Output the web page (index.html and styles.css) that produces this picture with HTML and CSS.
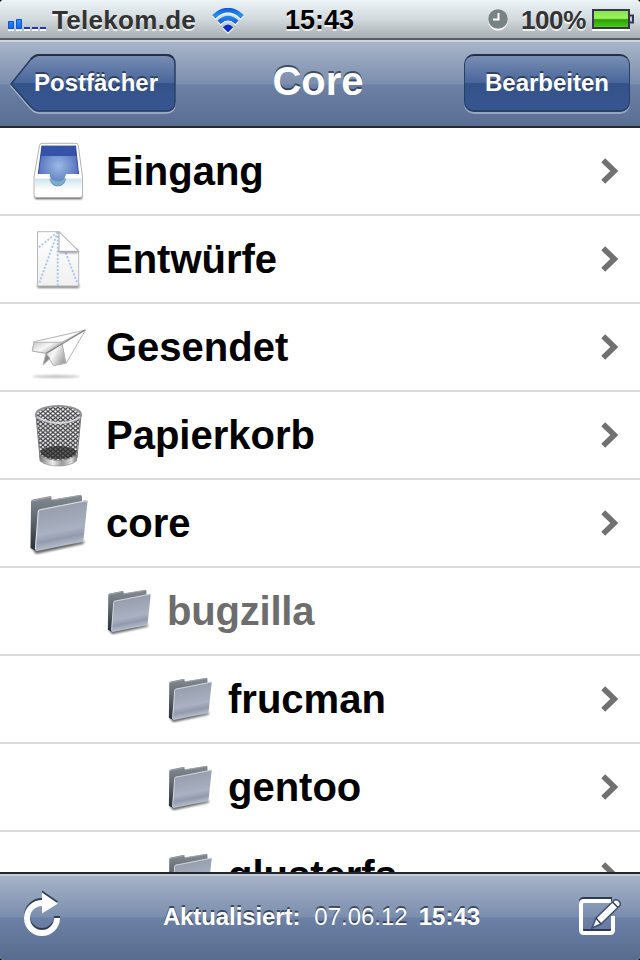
FILE: index.html
```html
<!DOCTYPE html>
<html lang="de">
<head>
<meta charset="utf-8">
<title>Core</title>
<link rel="stylesheet" href="styles.css">
</head>
<body>
<svg class="defs" width="0" height="0" aria-hidden="true">
  <defs>
    <linearGradient id="back" x1="0" y1="0" x2="0" y2="1"><stop offset="0" stop-color="#858d94"/><stop offset=".45" stop-color="#5f676e"/><stop offset="1" stop-color="#252c36"/></linearGradient>
    <linearGradient id="front" x1=".3" y1="0" x2=".5" y2="1"><stop offset="0" stop-color="#929aa8"/><stop offset=".62" stop-color="#a9b1c2"/><stop offset=".76" stop-color="#929bad"/><stop offset="1" stop-color="#cdd3de"/></linearGradient>
    <linearGradient id="tray" x1="0" y1="0" x2="0" y2="1"><stop offset="0" stop-color="#c9e2ec"/><stop offset=".7" stop-color="#fff"/></linearGradient>
    <radialGradient id="well" cx=".5" cy=".5" r=".6"><stop offset="0" stop-color="#9bb9e4"/><stop offset="1" stop-color="#4966b8"/></radialGradient>
    <linearGradient id="paper" x1="0" y1="0" x2="0" y2="1"><stop offset="0" stop-color="#fff"/><stop offset="1" stop-color="#f0f0f0"/></linearGradient>
    <linearGradient id="wing" x1="0" y1="0" x2="1" y2=".6"><stop offset="0" stop-color="#c4c4c4"/><stop offset=".5" stop-color="#f8f8f8"/><stop offset="1" stop-color="#a4a4a4"/></linearGradient>
    <linearGradient id="metal"><stop offset="0" stop-color="#777"/><stop offset=".35" stop-color="#eee"/><stop offset=".6" stop-color="#999"/><stop offset=".85" stop-color="#ddd"/><stop offset="1" stop-color="#777"/></linearGradient>
    <pattern id="mesh" width="5" height="4.2" patternUnits="userSpaceOnUse"><path d="M0 0L5 4.2M5 0L0 4.2" stroke="#454548" stroke-width="1.15"/></pattern>
    <linearGradient id="bars" x1="0" y1="0" x2="0" y2="1"><stop offset="0" stop-color="#2b9bf5"/><stop offset="1" stop-color="#0c62ec"/></linearGradient>
    <linearGradient id="waves" gradientUnits="userSpaceOnUse" x1="0" y1="0" x2="0" y2="24"><stop offset="0" stop-color="#1555cf"/><stop offset=".3" stop-color="#2190f2"/><stop offset="1" stop-color="#0624c0"/></linearGradient>
    <linearGradient id="charge" x1="0" y1="0" x2="0" y2="1"><stop offset="0" stop-color="#84e54a"/><stop offset=".45" stop-color="#9cf55b"/><stop offset=".55" stop-color="#2e9c08"/><stop offset="1" stop-color="#49cf14"/></linearGradient>
    <linearGradient id="button" x1="0" y1="0" x2="0" y2="1"><stop offset="0" stop-color="#788fb4"/><stop offset=".5" stop-color="#48659a"/><stop offset=".51" stop-color="#34528a"/><stop offset="1" stop-color="#37568f"/></linearGradient>
    <filter id="soft" x="-20%" y="-100%" width="140%" height="300%"><feGaussianBlur stdDeviation="1.2"/></filter>
    <symbol id="folder" viewBox="0 0 64 64">
      <path d="M3 56L8 63L55 53L57 50Z" fill="#000" opacity=".6" filter="url(#soft)"/>
      <path d="M3 11Q3 9 5 8.600L21.500 5.300Q23.500 5 23.500 6.500V8.800L52 4Q54 3.500 54 5.500V30L8 60L2.500 57Z" fill="url(#back)"/>
      <path d="M4 10L23 6M25 9L53 4.300" stroke="#a3aaaf" fill="none"/>
      <path d="M12 18.200L57.500 9.200Q60 8.800 59.500 11L55.500 48.500Q55 50.500 53 51L9 60Q7 60.300 7 58L10 20.500Q10 18.600 12 18.200Z" fill="url(#front)"/>
      <path d="M7.400 58L10.300 20.500Q10.500 19 12 18.800L58 9.800L59 10.300" fill="none" stroke="#dce0e7" stroke-width="1.100"/>
    </symbol>
    <symbol id="chevron" viewBox="0 0 20 28"><path d="M3.200 3.200L14.300 14L3.200 24.800" fill="none" stroke="#717171" stroke-width="5.600"/></symbol>
  </defs>
</svg>
<div class="screen">
  <header class="status">
    <svg class="signal" width="40" height="14" viewBox="0 0 40 14"><path d="M0 12.500H6V14H0ZM8 12.500H14V14H8ZM16 12H22V14H16ZM24 12H30V14H24ZM32 12H38V14H32Z" fill="#fff"/><path d="M.5 4.500H5.500V11.500H.5ZM8.500 2.500H13.500V11.500H8.500Z" fill="url(#bars)" stroke="#1450cf"/><path d="M16 10H22V12H16ZM24 10H30V12H24ZM32 10H38V12H32Z" fill="#1636bd"/></svg>
    <span class="carrier">Telekom.de</span>
    <svg class="wifi" width="32" height="26" viewBox="0 0 32 26"><g fill="none" stroke="#fff" stroke-width="4.600"><path d="M1.800 10Q16-4 30.200 10M7 15.500Q16 6.500 25 15.500"/></g><path d="M10.500 20.500Q16 14.500 21.500 20.500L16 26Z" fill="#fff"/><g fill="none" stroke="url(#waves)" stroke-width="4.600"><path d="M1.800 8.800Q16-4.500 30.200 8.800M7 14.300Q16 6 25 14.300"/></g><path d="M10.800 19.200Q16 14 21.200 19.200L16 24.500Z" fill="#0a2fc8"/></svg>
    <span class="clock">15:43</span>
    <svg class="alarm" width="22" height="22" viewBox="0 0 22 22"><circle cx="11" cy="11.500" r="10" fill="#fff"/><circle cx="11" cy="10" r="9.800" fill="#788483"/><path d="M11.500 4V10.500H6" fill="none" stroke="#fff" stroke-width="2"/></svg>
    <span class="percent">100%</span>
    <svg class="battery" width="42" height="22" viewBox="0 0 42 22"><path d="M0 20H38V22H0Z" fill="#fff"/><path d="M1 1H37V19H1Z" fill="#58a838" stroke="#38364f" stroke-width="2"/><path d="M38 6.500H41V13.500H38" fill="#c5cad0" stroke="#38364f" stroke-width="2"/><rect x="2" y="2" width="34" height="16" fill="url(#charge)"/></svg>
  </header>
  <nav class="navbar">
    <div class="back">
      <svg width="166" height="61" viewBox="0 0 166 61"><path d="M1 30L21 5Q25 1 29 1H156Q165 1 165 10V48Q165 57 156 57H29Q25 57 21 53Z" transform="translate(0 2)" fill="none" stroke="#a9b7cb" stroke-width="1.400"/><path d="M1 30L21 5Q25 1 29 1H156Q165 1 165 10V48Q165 57 156 57H29Q25 57 21 53Z" fill="url(#button)" stroke="#293f63" stroke-width="1.600"/><path d="M21 5Q25 1 29 1H156Q161 1 163 4" fill="none" stroke="#253047" stroke-width="2"/></svg>
      <span>Postfächer</span>
    </div>
    <h1>Core</h1>
    <div class="edit">Bearbeiten</div>
  </nav>
  <main class="list">
    <div class="row"><svg class="icon" viewBox="0 0 64 64"><path d="M7 56H54V60H7Z" fill="#000" opacity=".7" filter="url(#soft)"/><path d="M14 4.300H48Q50 4.300 50.300 6.500L54.500 38V56Q54.500 58.500 52 58.500H8.500Q6 58.500 6 56V38L11.500 6.500Q12 4.300 14 4.300Z" fill="#fff" stroke="#b3b3b3"/><path d="M7 39H53.500V56H7Z" fill="url(#tray)"/><path d="M14 6.700H47.500L50.500 35H38Q38 47 29.700 47Q21.500 47 21.500 35H10.300Z" fill="url(#well)"/><path d="M14 6.700H47.500L48.500 17H13Z" fill="#3651a8"/><path d="M14 6.700L10.300 35M47.500 6.700L50.500 35" stroke="#304b9e" fill="none"/><path d="M21.500 35Q21.500 47 29.700 47Q38 47 38 35Q37 42 29.700 42Q22.500 42 21.500 35" fill="#7dabc9" stroke="#5790b5" stroke-width=".6"/><path d="M10 35H21.500Q22 38 23 39.500H7V37ZM38 35H51L53.700 39.500H36.500Z" fill="#fff"/></svg><span>Eingang</span><svg class="go"><use href="#chevron"/></svg></div>
    <div class="row"><svg class="icon" viewBox="0 0 64 64"><path d="M9.500 57H51V61H9.500Z" fill="#000" opacity=".5" filter="url(#soft)"/><path d="M9.500 4.700H31L50.700 24.300V59H9.500Z" fill="url(#paper)" stroke="#b9b9b9"/><path d="M29.700 5L10.300 20.700M29.700 5L11 57M29.700 5V58.700M29.700 5L49.700 57" fill="none" stroke="#a9c4f3" stroke-width="1.900" stroke-dasharray="2 1.700"/><path d="M31 22H50V26H31Z" fill="#000" opacity=".4" filter="url(#soft)"/><path d="M31 4.700L50.700 24.300H31Z" fill="#fff" stroke="#aaa"/></svg><span>Entwürfe</span><svg class="go"><use href="#chevron"/></svg></div>
    <div class="row"><svg class="icon" viewBox="0 0 64 64"><ellipse cx="28" cy="61.500" rx="24" ry="1.400" fill="#000" opacity=".25" filter="url(#soft)"/><g stroke="#b4b4b4" stroke-linejoin="round"><path d="M6 26.700L57.500 15L34 27.300L18 38.300L4.300 36Z" fill="#fcfcfc"/><path d="M6 27.300H33.700L18 38.300L4.300 36Z" fill="url(#wing)"/><path d="M57.500 15L38 48.500L33.700 27.300Z" fill="#fff"/><path d="M33.700 27.300L37.700 48.300L25.300 50.700L18 38.300Z" fill="url(#wing)"/><path d="M18 38.300L15 50L22 43.500Z" fill="#888"/></g><path d="M57 15L18 38.500" stroke="#808080" stroke-width="1.200"/></svg><span>Gesendet</span><svg class="go"><use href="#chevron"/></svg></div>
    <div class="row"><svg class="icon" viewBox="0 0 64 64"><path d="M8 12L12.500 57Q30 67 48 57L53 12Z" fill="#f0f0f2"/><path d="M8 12L12.500 57Q30 67 48 57L53 12Q46 2 30.500 3Q14 2 8 12Z" fill="url(#mesh)"/><ellipse cx="30.500" cy="49.500" rx="18" ry="6.500" fill="#222" opacity=".68"/><path d="M11.500 52Q30 63 49 52L48.500 58Q42 63 30.500 63Q18 63 12 58Z" fill="url(#metal)" stroke="#888" stroke-width=".6"/><path d="M8 12L12 55M53 12L49 55" stroke="#777"/><ellipse cx="30.500" cy="11.500" rx="22.500" ry="8.500" fill="none" stroke="#919196" stroke-width="2"/><path d="M9 14Q20 20 31 20Q43 20 52 14" fill="none" stroke="#d7d7dc" stroke-width="1.800"/></svg><span>Papierkorb</span><svg class="go"><use href="#chevron"/></svg></div>
    <div class="row"><svg class="icon"><use href="#folder"/></svg><span>core</span><svg class="go"><use href="#chevron"/></svg></div>
    <div class="row level1 disabled"><svg class="icon"><use href="#folder"/></svg><span>bugzilla</span></div>
    <div class="row level2"><svg class="icon"><use href="#folder"/></svg><span>frucman</span><svg class="go"><use href="#chevron"/></svg></div>
    <div class="row level2"><svg class="icon"><use href="#folder"/></svg><span>gentoo</span><svg class="go"><use href="#chevron"/></svg></div>
    <div class="row level2"><svg class="icon"><use href="#folder"/></svg><span>glusterfs</span><svg class="go"><use href="#chevron"/></svg></div>
  </main>
  <footer class="toolbar">
    <svg class="tool" width="42" height="48" viewBox="0 0 42 48"><g fill="none" stroke="#2c3a52" stroke-width="6"><path d="M19 8A15 15 0 1 0 34 23" /><path d="M19-2.500L35 8.500L19 18Z" fill="#2c3a52" stroke="none"/></g><path d="M19 10A15 15 0 1 0 34 25" fill="none" stroke="#fff" stroke-width="6"/><path d="M19-.5L35 10.500L19 20.500Z" fill="#fff"/></svg>
    <p><b>Aktualisiert:</b><span>07.06.12</span><b>15:43</b></p>
    <svg class="tool" width="44" height="42" viewBox="0 0 44 42"><path d="M33 5H5Q2 5 2 8V34Q2 37 5 37H31Q34 37 34 34V22" transform="translate(0 -2)" fill="none" stroke="#2c3a52" stroke-width="4"/><path d="M32 5H5Q2 5 2 8V34Q2 37 5 37H31Q34 37 34 34V20" fill="none" stroke="#fff" stroke-width="4"/><path d="M13 32L17 22L35 4.500Q37 2.500 40 5Q42.500 8 40.500 10L22 28Z" fill="#fff" stroke="#43557a" stroke-width="1.600"/><path d="M17 22L22 28M33.500 6L39 11.500" stroke="#2c3a52" stroke-width="1.400"/></svg>
  </footer>
</div>
</body>
</html>
```
FILE: styles.css
```css
* { box-sizing: border-box; }
body { margin: 0; background: #000; font-family: "Liberation Sans", Arial, sans-serif; }
.defs { position: absolute; }
.screen { width: 640px; height: 960px; display: flex; flex-direction: column; overflow: hidden; border-radius: 4px; background: #fff; }
svg { display: block; flex: none; }
.status { height: 40px; flex: none; display: flex; align-items: flex-start; padding: 7px 6px 0 8px; font-size: 26px; line-height: 26px; font-weight: bold; color: #333; text-shadow: 0 2px 0 rgba(255,255,255,.75); background: linear-gradient(#ebf4f7, #d3dadd 50%, #adb4b9 94%); border-bottom: 2px solid #555e68; }
.signal { margin-top: 10px; }
.carrier { margin-left: 4px; width: 160px; letter-spacing: .3px; }
.wifi { margin-top: 1px; }
.clock { margin-left: 41px; width: 202px; font-size: 27px; color: #000; }
.alarm { margin-top: 2px; margin-right: 12px; }
.percent { width: 71px; letter-spacing: -.4px; }
.battery { margin-top: 2px; }
.navbar { height: 88px; flex: none; display: flex; align-items: flex-start; justify-content: space-between; padding: 12px 10px 0; color: #fff; border-top: 2px solid #ced5de; border-bottom: 2px solid #262a30; background: linear-gradient(#a8b5c8, #7b8eae 50%, #6c81a5 51%, #596e92); text-shadow: 0 -2px 0 rgba(35,48,72,.75); }
.back { display: grid; font-size: 24px; font-weight: bold; width: 166px; line-height: 58px; }
.back svg, .back span { grid-area: 1 / 1; }
.back span { padding-left: 24px; }
h1 { margin: 0 4px 0 0; font-size: 40px; line-height: 54px; }
.edit { width: 166px; height: 58px; border-radius: 10px; border: 2px solid #293f63; border-top-color: #253047; border-left-width: 1px; border-right-width: 1px; background: linear-gradient(#788fb4, #48659a 50%, #34528a 51%, #37568f); box-shadow: 0 2px 0 rgba(188,202,220,.6); font-size: 24px; line-height: 54px; font-weight: bold; text-align: center; }
.list { flex: 1; min-height: 0; overflow: hidden; }
.row { height: 88px; display: flex; align-items: center; gap: 14px; padding: 0 20px 0 28px; border-bottom: 2px solid #d9d9d9; font-size: 40px; font-weight: bold; color: #000; }
.row span { flex: 1; }
.icon { width: 64px; height: 64px; }
.go { width: 20px; height: 28px; }
.level1, .level2 { gap: 13px; }
.level1 { padding-left: 106px; }
.level2 { padding-left: 167px; }
.level1 .icon, .level2 .icon { width: 48px; height: 48px; }
.disabled { color: #6d6d6d; letter-spacing: -.2px; }
.toolbar { height: 88px; flex: none; display: flex; align-items: center; justify-content: space-between; padding: 0 17px 0 23px; border-top: 2px solid #22262b; box-shadow: inset 0 2px 0 #c3ccd8; color: #fff; background: linear-gradient(#a8b5c8, #7b8eae 50%, #6c81a5 51%, #586c90); font-size: 24px; text-shadow: 0 -2px 0 rgba(35,48,72,.75); }
.tool { overflow: visible; }
.toolbar p { margin: 0 0 0 -1px; display: flex; }
.toolbar p span { margin: 0 11px 0 14px; }
.toolbar p b:first-child { letter-spacing: -.1px; }
```
